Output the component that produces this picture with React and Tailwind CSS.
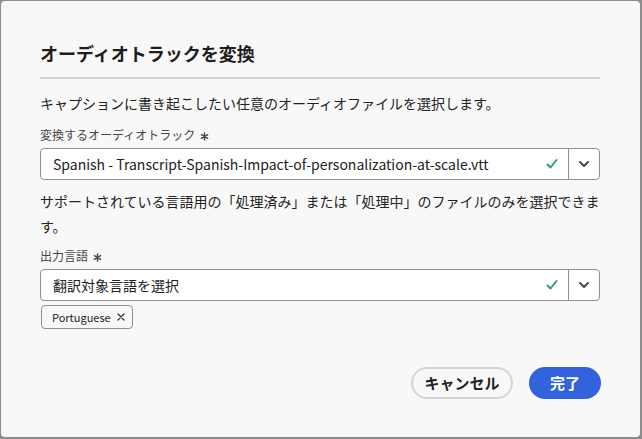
const font = { fontFamily: '"Noto Sans CJK JP", "Noto Sans", sans-serif' };

function Check() {
  return (
    <svg width="14" height="14" viewBox="0 0 14 14" className="text-[#2d9f74]">
      <path d="M2.5 7.5 L5.5 10.5 L11.5 3" fill="none" stroke="currentColor" strokeWidth="2" strokeLinecap="round" strokeLinejoin="round" />
    </svg>
  );
}

function Chevron() {
  return (
    <svg width="12" height="12" viewBox="0 0 12 12" className="text-[#4b4b4b]">
      <path d="M2 4 L6 8 L10 4" fill="none" stroke="currentColor" strokeWidth="2" strokeLinecap="round" strokeLinejoin="round" />
    </svg>
  );
}

function Picker({ value }) {
  return (
    <div className="mt-1 flex h-8 w-[560px] rounded-[4px] border border-[#909090] bg-white">
      <div className="flex flex-1 items-center pl-3 pr-[9px] text-[14px] text-[#222]">
        <span className="flex-1 truncate">{value}</span>
        <Check />
      </div>
      <div className="flex w-[31px] items-center justify-center border-l border-[#909090]">
        <Chevron />
      </div>
    </div>
  );
}

function Label({ children }) {
  return (
    <div className="flex items-center gap-[5px] text-[12px] leading-[18px] text-[#464646]">
      <span>{children}</span>
      <svg width="9" height="9" viewBox="0 0 10 10" className="mt-[2px] text-[#464646]">
        <path d="M5 1 V9 M1.5 3 L8.5 7 M8.5 3 L1.5 7" stroke="currentColor" strokeWidth="1.6" strokeLinecap="round" />
      </svg>
    </div>
  );
}

export default function App() {
  return (
    <div className="h-[439px] w-[642px] bg-[#8c8c8c] pl-px pt-px" style={font}>
      <div className="h-[436px] w-[639px] rounded-[4px] bg-[#f8f8f8] pl-[39px] pt-[40px]">
        <h2 className="text-[18px] font-bold leading-[24px] text-[#1d1d1d]">オーディオトラックを変換</h2>
        <div className="mt-3 h-[2px] w-[560px] bg-[#d5d5d5]" />

        <p className="mt-[14px] text-[14px] leading-[21px] text-[#222]">
          キャプションに書き起こしたい任意のオーディオファイルを選択します。
        </p>

        <div className="mt-3">
          <Label>変換するオーディオトラック</Label>
        </div>
        <Picker value="Spanish - Transcript-Spanish-Impact-of-personalization-at-scale.vtt" />

        <p className="mt-[9px] w-[560px] text-[14px] leading-[25px] text-[#222]">
          サポートされている言語用の「処理済み」または「処理中」のファイルのみを選択できます。
        </p>

        <div className="mt-2">
          <Label>出力言語</Label>
        </div>
        <Picker value="翻訳対象言語を選択" />

        <div className="ml-px mt-1 inline-flex h-6 items-center gap-[6px] rounded-[4px] border border-[#909090] bg-[#f8f8f8] pl-[10px] pr-[7px] text-[11px] text-[#222]">
          <span>Portuguese</span>
          <svg width="8" height="8" viewBox="0 0 8 8" className="text-[#333]">
            <path d="M1 1 L7 7 M7 1 L1 7" stroke="currentColor" strokeWidth="1.3" strokeLinecap="round" />
          </svg>
        </div>

        <div className="mt-[38px] flex w-[561px] justify-end gap-4">
          <button className="flex h-8 w-[102px] items-center justify-center rounded-full border-2 border-[#d5d5d5] text-[15px] font-bold text-[#222]">
            キャンセル
          </button>
          <button className="flex h-8 w-[72px] items-center justify-center rounded-full bg-[#3363dc] text-[15px] font-bold text-white">
            完了
          </button>
        </div>
      </div>
    </div>
  );
}
